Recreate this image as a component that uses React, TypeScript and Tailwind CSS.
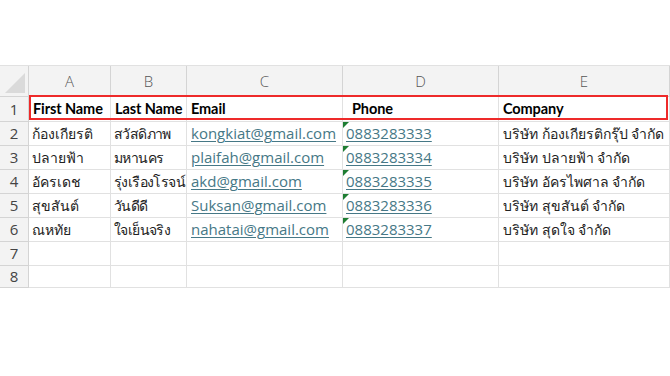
import React from "react";

const rows = [
  ["ก้องเกียรติ", "สวัสดิภาพ", "kongkiat@gmail.com", "0883283333", "บริษัท ก้องเกียรติกรุ๊ป จำกัด"],
  ["ปลายฟ้า", "มหานคร", "plaifah@gmail.com", "0883283334", "บริษัท ปลายฟ้า จำกัด"],
  ["อัครเดช", "รุ่งเรืองโรจน์", "akd@gmail.com", "0883283335", "บริษัท อัครไพศาล จำกัด"],
  ["สุขสันต์", "วันดีดี", "Suksan@gmail.com", "0883283336", "บริษัท สุขสันต์ จำกัด"],
  ["ณหทัย", "ใจเย็นจริง", "nahatai@gmail.com", "0883283337", "บริษัท สุดใจ จำกัด"],
];

const cell = "border-r border-b border-[#e1e1e1] flex items-center overflow-hidden whitespace-nowrap";
const rowHead = "border-r border-b border-[#d4d4d4] bg-[#f3f3f3] flex items-center justify-center text-[#444] text-[15px]";
const colHead = "border-r border-b border-[#d4d4d4] bg-[#f3f3f3] flex items-center justify-center text-[#555] text-[15px] font-light";
const head = "font-bold text-[14.5px] text-black tracking-[-0.1px]";
const thai = "text-[14px] text-[#222]";

export default function App() {
  return (
    <div className="w-[670px] h-[376px] bg-white overflow-hidden" style={{ fontFamily: '"Open Sans", "Noto Sans", sans-serif' }}>
      <div className="h-[65px]" />
      <div className="relative">
        <div className="grid grid-cols-[29px_82px_76px_156px_156px_171px] grid-rows-[31px_25px_24px_24px_24px_24px_24px_24px_22px] border-t border-[#e1e1e1] text-[#222] text-[15px]">
          <div className="border-r border-b border-[#d4d4d4] bg-[#f3f3f3] relative">
            <div className="absolute right-[3px] bottom-[3px] w-0 h-0 border-l-[20px] border-l-transparent border-b-[20px] border-b-[#dadada]" />
          </div>
          {["A", "B", "C", "D", "E"].map((c) => (
            <div key={c} className={colHead}>{c}</div>
          ))}
          <div className={rowHead}>1</div>
          <div className={`${cell} pl-[4px] ${head}`} style={{ fontFamily: "Lato, sans-serif" }}>First Name</div>
          <div className={`${cell} pl-[4px] ${head}`} style={{ fontFamily: "Lato, sans-serif" }}>Last Name</div>
          <div className={`${cell} pl-[4px] ${head}`} style={{ fontFamily: "Lato, sans-serif" }}>Email</div>
          <div className={`${cell} pl-[9px] ${head}`} style={{ fontFamily: "Lato, sans-serif" }}>Phone</div>
          <div className={`${cell} pl-[4px] ${head}`} style={{ fontFamily: "Lato, sans-serif" }}>Company</div>
          {rows.map((r, i) => (
            <React.Fragment key={i}>
              <div className={rowHead}>{i + 2}</div>
              <div className={`${cell} pl-[3px] ${thai}`}>{r[0]}</div>
              <div className={`${cell} pl-[3px] ${thai} tracking-[-0.6px]`}>{r[1]}</div>
              <div className={`${cell} pl-[4px] text-[#467886] underline underline-offset-2`}>{r[2]}</div>
              <div className={`${cell} pl-[3px] text-[#467886] underline underline-offset-2 relative`}>
                <div className="absolute left-0 top-0 w-0 h-0 border-t-[6px] border-t-[#1e7d32] border-r-[6px] border-r-transparent" />
                {r[3]}
              </div>
              <div className={`${cell} pl-[4px] ${thai}`}>{r[4]}</div>
            </React.Fragment>
          ))}
          {[7, 8].map((n) => (
            <React.Fragment key={n}>
              <div className={rowHead}>{n}</div>
              <div className={cell} />
              <div className={cell} />
              <div className={cell} />
              <div className={cell} />
              <div className={cell} />
            </React.Fragment>
          ))}
        </div>
        <div className="absolute left-[29px] top-[30px] w-[639px] h-[25px] border-2 border-[#ee2a2a] pointer-events-none" />
      </div>
    </div>
  );
}
